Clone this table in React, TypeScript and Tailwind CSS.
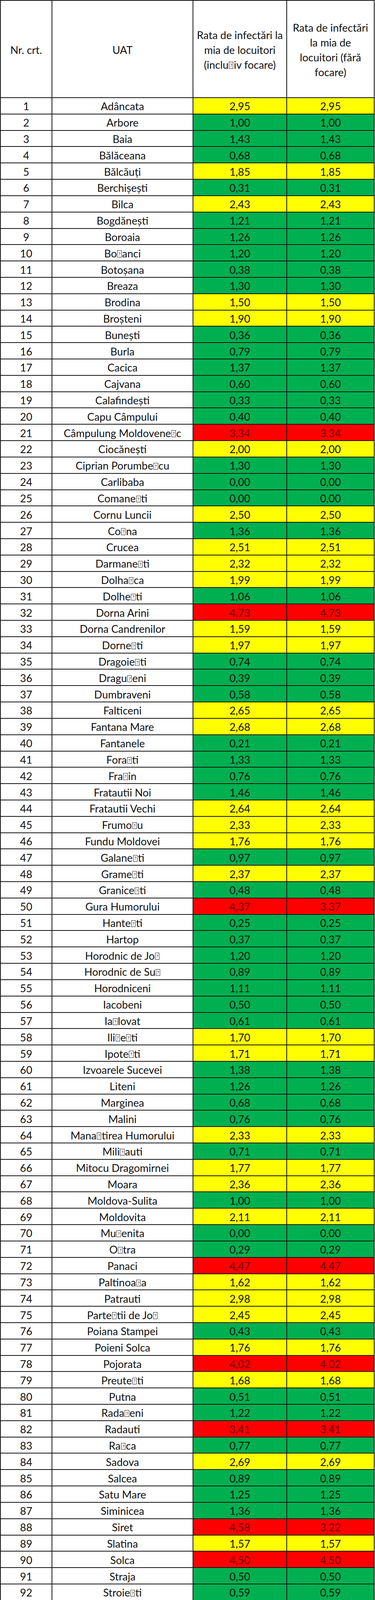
import React from "react";

type C = "g" | "y" | "r";
type Row = [string, string, C, string, C];

// "¤" marks a character rendered as a missing-glyph box in the source
const rows: Row[] = [
  ["Adâncata", "2,95", "y", "2,95", "y"],
  ["Arbore", "1,00", "g", "1,00", "g"],
  ["Baia", "1,43", "g", "1,43", "g"],
  ["Bălăceana", "0,68", "g", "0,68", "g"],
  ["Bălcăuți", "1,85", "y", "1,85", "y"],
  ["Berchișești", "0,31", "g", "0,31", "g"],
  ["Bilca", "2,43", "y", "2,43", "y"],
  ["Bogdănești", "1,21", "g", "1,21", "g"],
  ["Boroaia", "1,26", "g", "1,26", "g"],
  ["Bo¤anci", "1,20", "g", "1,20", "g"],
  ["Botoșana", "0,38", "g", "0,38", "g"],
  ["Breaza", "1,30", "g", "1,30", "g"],
  ["Brodina", "1,50", "y", "1,50", "y"],
  ["Broșteni", "1,90", "y", "1,90", "y"],
  ["Bunești", "0,36", "g", "0,36", "g"],
  ["Burla", "0,79", "g", "0,79", "g"],
  ["Cacica", "1,37", "g", "1,37", "g"],
  ["Cajvana", "0,60", "g", "0,60", "g"],
  ["Calafindești", "0,33", "g", "0,33", "g"],
  ["Capu Câmpului", "0,40", "g", "0,40", "g"],
  ["Câmpulung Moldovene¤c", "3,34", "r", "3,34", "r"],
  ["Ciocănești", "2,00", "y", "2,00", "y"],
  ["Ciprian Porumbe¤cu", "1,30", "g", "1,30", "g"],
  ["Carlibaba", "0,00", "g", "0,00", "g"],
  ["Comane¤ti", "0,00", "g", "0,00", "g"],
  ["Cornu Luncii", "2,50", "y", "2,50", "y"],
  ["Co¤na", "1,36", "g", "1,36", "g"],
  ["Crucea", "2,51", "y", "2,51", "y"],
  ["Darmane¤ti", "2,32", "y", "2,32", "y"],
  ["Dolha¤ca", "1,99", "y", "1,99", "y"],
  ["Dolhe¤ti", "1,06", "g", "1,06", "g"],
  ["Dorna Arini", "4,73", "r", "4,73", "r"],
  ["Dorna Candrenilor", "1,59", "y", "1,59", "y"],
  ["Dorne¤ti", "1,97", "y", "1,97", "y"],
  ["Dragoie¤ti", "0,74", "g", "0,74", "g"],
  ["Dragu¤eni", "0,39", "g", "0,39", "g"],
  ["Dumbraveni", "0,58", "g", "0,58", "g"],
  ["Falticeni", "2,65", "y", "2,65", "y"],
  ["Fantana Mare", "2,68", "y", "2,68", "y"],
  ["Fantanele", "0,21", "g", "0,21", "g"],
  ["Fora¤ti", "1,33", "g", "1,33", "g"],
  ["Fra¤in", "0,76", "g", "0,76", "g"],
  ["Fratautii Noi", "1,46", "g", "1,46", "g"],
  ["Fratautii Vechi", "2,64", "y", "2,64", "y"],
  ["Frumo¤u", "2,33", "y", "2,33", "y"],
  ["Fundu Moldovei", "1,76", "y", "1,76", "y"],
  ["Galane¤ti", "0,97", "g", "0,97", "g"],
  ["Grame¤ti", "2,37", "y", "2,37", "y"],
  ["Granice¤ti", "0,48", "g", "0,48", "g"],
  ["Gura Humorului", "4,37", "r", "3,37", "r"],
  ["Hante¤ti", "0,25", "g", "0,25", "g"],
  ["Hartop", "0,37", "g", "0,37", "g"],
  ["Horodnic de Jo¤", "1,20", "g", "1,20", "g"],
  ["Horodnic de Su¤", "0,89", "g", "0,89", "g"],
  ["Horodniceni", "1,11", "g", "1,11", "g"],
  ["Iacobeni", "0,50", "g", "0,50", "g"],
  ["Ia¤lovat", "0,61", "g", "0,61", "g"],
  ["Ili¤e¤ti", "1,70", "y", "1,70", "y"],
  ["Ipote¤ti", "1,71", "y", "1,71", "y"],
  ["Izvoarele Sucevei", "1,38", "g", "1,38", "g"],
  ["Liteni", "1,26", "g", "1,26", "g"],
  ["Marginea", "0,68", "g", "0,68", "g"],
  ["Malini", "0,76", "g", "0,76", "g"],
  ["Mana¤tirea Humorului", "2,33", "y", "2,33", "y"],
  ["Mili¤auti", "0,71", "g", "0,71", "g"],
  ["Mitocu Dragomirnei", "1,77", "y", "1,77", "y"],
  ["Moara", "2,36", "y", "2,36", "y"],
  ["Moldova-Sulita", "1,00", "g", "1,00", "g"],
  ["Moldovita", "2,11", "y", "2,11", "y"],
  ["Mu¤enita", "0,00", "g", "0,00", "g"],
  ["O¤tra", "0,29", "g", "0,29", "g"],
  ["Panaci", "4,47", "r", "4,47", "r"],
  ["Paltinoa¤a", "1,62", "y", "1,62", "y"],
  ["Patrauti", "2,98", "y", "2,98", "y"],
  ["Parte¤tii de Jo¤", "2,45", "y", "2,45", "y"],
  ["Poiana Stampei", "0,43", "g", "0,43", "g"],
  ["Poieni Solca", "1,76", "y", "1,76", "y"],
  ["Pojorata", "4,02", "r", "4,02", "r"],
  ["Preute¤ti", "1,68", "y", "1,68", "y"],
  ["Putna", "0,51", "g", "0,51", "g"],
  ["Rada¤eni", "1,22", "g", "1,22", "g"],
  ["Radauti", "3,41", "r", "3,41", "r"],
  ["Ra¤ca", "0,77", "g", "0,77", "g"],
  ["Sadova", "2,69", "y", "2,69", "y"],
  ["Salcea", "0,89", "g", "0,89", "g"],
  ["Satu Mare", "1,25", "g", "1,25", "g"],
  ["Siminicea", "1,36", "g", "1,36", "g"],
  ["Siret", "4,58", "r", "3,22", "r"],
  ["Slatina", "1,57", "y", "1,57", "y"],
  ["Solca", "4,50", "r", "4,50", "r"],
  ["Straja", "0,50", "g", "0,50", "g"],
  ["Stroie¤ti", "0,59", "g", "0,59", "g"],
  ["Stulpicani", "0,99", "g", "0,99", "g"],
  ["Suceava", "3,68", "r", "3,67", "r"],
  ["Sucevita", "1,76", "y", "1,76", "y"],
  ["Șaru Dornei", "3,59", "r", "3,59", "r"],
  ["Șcheia", "3,04", "r", "3,04", "r"],
  ["Șerbauti", "0,30", "g", "0,30", "g"],
  ["Todire¤ti", "3,05", "r", "3,05", "r"],
  ["Ude¤ti", "2,53", "y", "2,53", "y"],
  ["Ulma", "1,34", "g", "1,34", "g"],
  ["Vadu Moldovei", "2,42", "y", "2,42", "y"],
  ["Valea Moldovei", "0,00", "g", "0,00", "g"],
  ["Vama", "2,23", "y", "2,23", "y"],
  ["Vatra Dornei", "4,29", "r", "4,29", "r"],
  ["Vatra Moldovitei", "1,58", "y", "1,58", "y"],
  ["Vere¤ti", "0,53", "g", "0,53", "g"],
  ["Vicovu de Jo¤", "0,72", "g", "0,72", "g"],
  ["Vicovu de Su¤", "0,86", "g", "0,57", "g"],
  ["Voitinel", "0,37", "g", "0,37", "g"],
  ["Volovat", "0,95", "g", "0,95", "g"],
  ["Vulture¤ti", "0,55", "g", "0,55", "g"],
  ["Zamo¤tea", "1,31", "g", "1,31", "g"],
  ["Zvori¤tea", "3,88", "r", "2,91", "y"],
];

const fill: Record<C, string> = {
  g: "bg-[#00b050] text-[#111111]",
  y: "bg-[#ffff00] text-[#111111]",
  r: "bg-[#ff0000] text-[#6a0000]",
};

function Tofu() {
  return (
    <span className="relative inline-block w-[0.42em] h-[0.64em] mx-[1px] border border-[#222222] align-baseline">
      <span className="absolute inset-0 flex items-center justify-center text-[0.42em] leading-none">?</span>
    </span>
  );
}

function Name({ text }: { text: string }) {
  const parts = text.split("¤");
  return (
    <span className="whitespace-nowrap">
      {parts.map((p, i) => (
        <React.Fragment key={i}>
          {p}
          {i < parts.length - 1 && <Tofu />}
        </React.Fragment>
      ))}
    </span>
  );
}

const cell = "flex items-center justify-center pt-[2px] overflow-hidden";

export default function App() {
  return (
    <div className="w-[960px] h-[5067px] overflow-hidden bg-white font-['Lato',sans-serif] text-[27px] text-[#111111] leading-none">
      <div className="w-[959px] h-[5018.5px] grid grid-cols-[130px_359px_238px_222px] grid-rows-[247px_repeat(114,39.82px)] gap-[2px] p-[2px] bg-[#141414]">
        {/* header */}
        <div className="bg-white flex items-center justify-center pt-[4px]">Nr. crt.</div>
        <div className="bg-white flex items-center justify-center pt-[4px]">UAT</div>
        <div className="bg-white flex flex-col items-center justify-center leading-[38px] pt-[4px] whitespace-nowrap">
          <span>Rata de infectări la</span>
          <span>mia de locuitori</span>
          <span>
            (inclu<Tofu />iv focare)
          </span>
        </div>
        <div className="bg-white flex flex-col items-center justify-center leading-[38px] pt-[4px] whitespace-nowrap">
          <span>Rata de infectări</span>
          <span>la mia de</span>
          <span>locuitori (fără</span>
          <span>focare)</span>
        </div>
        {rows.map((r, i) => (
          <React.Fragment key={i}>
            <div className={`${cell} bg-white`}>{i + 1}</div>
            <div className={`${cell} bg-white`}>
              <Name text={r[0]} />
            </div>
            <div className={`${cell} ${fill[r[2]]}`}>{r[1]}</div>
            <div className={`${cell} ${fill[r[4]]}`}>{r[3]}</div>
          </React.Fragment>
        ))}
      </div>
      {/* total row */}
      <div className="flex h-[44.5px]">
        <div className="w-[132px] bg-white" />
        <div className="w-[361px] border-l-2 border-[#141414] bg-white flex items-center justify-center pt-[2px]">TOTAL</div>
        <div className="w-[466px] flex border-x-[3px] border-b-[3px] border-t-[1px] border-[#141414]">
          <div className="w-[237px] bg-[#f8c4a0] flex items-center justify-center pt-[2px]">2,18</div>
          <div className="w-[3px] bg-[#141414]" />
          <div className="flex-1 bg-[#ffff00] flex items-center justify-center pt-[2px]">2,12</div>
        </div>
      </div>
    </div>
  );
}
